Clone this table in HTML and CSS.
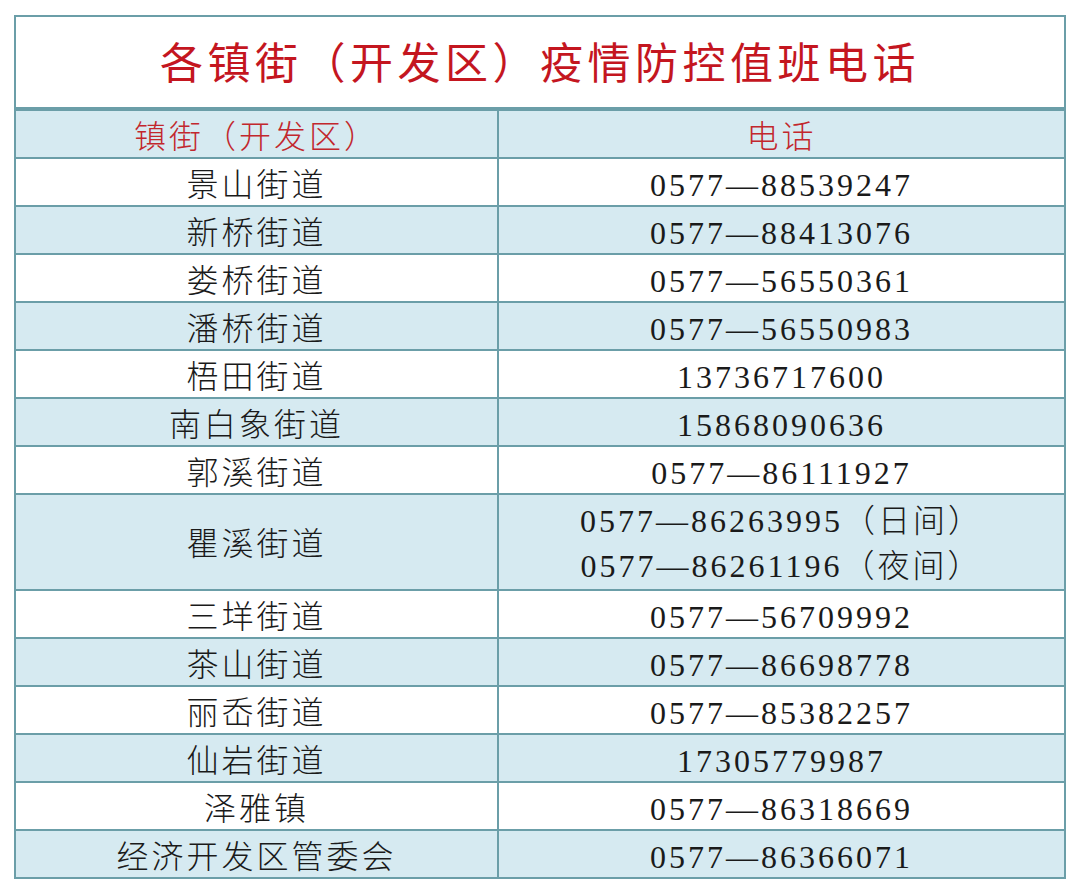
FILE: index.html
```html
<!DOCTYPE html>
<html lang="zh-CN">
<head>
<meta charset="utf-8">
<title>各镇街（开发区）疫情防控值班电话</title>
<link rel="stylesheet" href="styles.css">
</head>
<body>
<div class="wrap">
<table class="tbl">
  <tr class="title-row"><td colspan="2" class="title">各镇街（开发区）疫情防控值班电话</td></tr>
  <tr class="head blue"><td class="name">镇街（开发区）</td><td class="tel">电话</td></tr>
  <tr><td class="name">景山街道</td><td class="tel">0577—88539247</td></tr>
  <tr class="blue"><td class="name">新桥街道</td><td class="tel">0577—88413076</td></tr>
  <tr><td class="name">娄桥街道</td><td class="tel">0577—56550361</td></tr>
  <tr class="blue"><td class="name">潘桥街道</td><td class="tel">0577—56550983</td></tr>
  <tr><td class="name">梧田街道</td><td class="tel">13736717600</td></tr>
  <tr class="blue"><td class="name">南白象街道</td><td class="tel">15868090636</td></tr>
  <tr><td class="name">郭溪街道</td><td class="tel">0577—86111927</td></tr>
  <tr class="blue double"><td class="name">瞿溪街道</td><td class="tel">0577—86263995（日间）<br>0577—86261196（夜间）</td></tr>
  <tr><td class="name">三垟街道</td><td class="tel">0577—56709992</td></tr>
  <tr class="blue"><td class="name">茶山街道</td><td class="tel">0577—86698778</td></tr>
  <tr><td class="name">丽岙街道</td><td class="tel">0577—85382257</td></tr>
  <tr class="blue"><td class="name">仙岩街道</td><td class="tel">17305779987</td></tr>
  <tr><td class="name">泽雅镇</td><td class="tel">0577—86318669</td></tr>
  <tr class="blue"><td class="name">经济开发区管委会</td><td class="tel">0577—86366071</td></tr>
</table>
</div>
</body>
</html>
```
FILE: styles.css
```css
html, body {
  margin: 0;
  padding: 0;
  background: #ffffff;
}
.wrap {
  padding: 15px 0 0 14px;
}
.tbl {
  width: 1052px;
  border-collapse: collapse;
  border: 2px solid #6b9ea8;
  font-family: "Liberation Serif", "Noto Sans CJK SC", serif;
  color: #1a1a1a;
}
.tbl td {
  border: 2px solid #6b9ea8;
  padding: 6px 0 0 0;
  text-align: center;
  font-size: 32px;
  letter-spacing: 3px;
  height: 40px;
  line-height: 40px;
  font-weight: 300;
}
.tbl td.name {
  width: 481px;
}
.title-row td.title {
  padding-top: 6px;
  height: 84px;
  line-height: 84px;
  font-size: 43px;
  letter-spacing: 4.5px;
  color: #c4161f;
  font-weight: 400;
  border-bottom: 4px solid #6b9ea8;
  background: #ffffff;
}
.blue td {
  background: #d6eaf1;
}
.head td {
  color: #c2272d;
}
.double td {
  padding-top: 4px;
  height: 90px;
  line-height: 45px;
}
```
